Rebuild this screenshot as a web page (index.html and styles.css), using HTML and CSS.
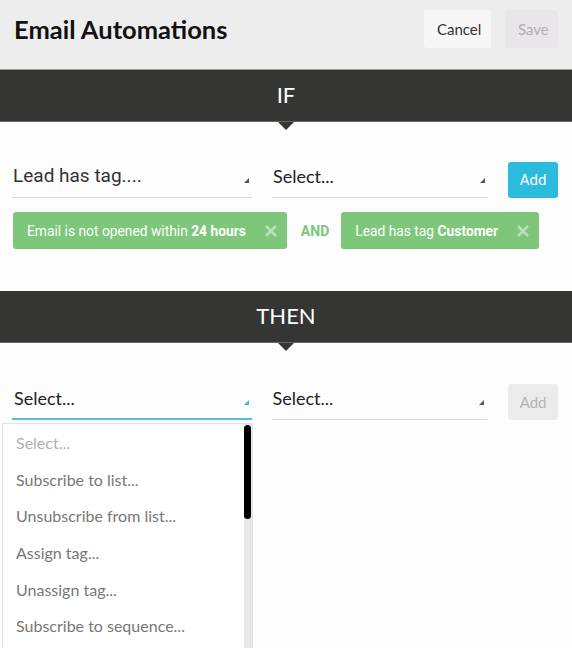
FILE: index.html
```html
<!DOCTYPE html>
<html lang="en">
<head>
  <meta charset="UTF-8">
  <title>Email Automations</title>
  <link rel="stylesheet" href="styles.css">
</head>
<body>
  <header class="topbar">
    <h1 class="title">Email Automations</h1>
    <div class="actions">
      <button class="btn btn-cancel">Cancel</button>
      <button class="btn btn-save">Save</button>
    </div>
  </header>

  <div class="section-bar">IF</div>
  <section class="section if-section">
    <div class="rule-row">
      <div class="select select-roboto">
        <span>Lead has tag....</span>
        <i class="caret"></i>
      </div>
      <div class="select select-second">
        <span>Select...</span>
        <i class="caret"></i>
      </div>
      <button class="add-btn">Add</button>
    </div>
    <div class="chips">
      <div class="chip">
        <span>Email is not opened within <b>24 hours</b></span>
        <svg class="chip-x" viewBox="0 0 12 12"><path d="M1 1L11 11M11 1L1 11"/></svg>
      </div>
      <span class="and">AND</span>
      <div class="chip">
        <span>Lead has tag <b>Customer</b></span>
        <svg class="chip-x" viewBox="0 0 12 12"><path d="M1 1L11 11M11 1L1 11"/></svg>
      </div>
    </div>
  </section>

  <div class="section-bar">THEN</div>
  <section class="section then-section">
    <div class="rule-row">
      <div class="select select-active">
        <span>Select...</span>
        <i class="caret"></i>
        <div class="menu">
          <ul class="menu-list">
            <li class="placeholder">Select...</li>
            <li>Subscribe to list...</li>
            <li>Unsubscribe from list...</li>
            <li>Assign tag...</li>
            <li>Unassign tag...</li>
            <li>Subscribe to sequence...</li>
          </ul>
          <div class="scroll-track"><div class="scroll-thumb"></div></div>
        </div>
      </div>
      <div class="select select-second">
        <span>Select...</span>
        <i class="caret"></i>
      </div>
      <button class="add-btn add-disabled">Add</button>
    </div>
  </section>
</body>
</html>
```

FILE: styles.css
```css
* {
  margin: 0;
  padding: 0;
  box-sizing: border-box;
}

html, body {
  height: 100%;
}

body {
  font-family: Lato, "Liberation Sans", sans-serif;
  background-color: #fcfdfc;
  color: #222;
  overflow: hidden;
}

.topbar {
  height: 70px;
  background-color: #ededed;
  border-bottom: 1px solid #999;
  display: flex;
  align-items: flex-start;
  justify-content: space-between;
  padding: 10px 14px 0 14px;
}

.title {
  font-size: 25.5px;
  font-weight: bold;
  color: #111;
  line-height: 38px;
}

.actions {
  display: flex;
  gap: 14px;
}

.btn {
  height: 38px;
  border: none;
  border-radius: 3px;
  font-family: Lato, sans-serif;
  font-size: 15px;
  padding: 0 13px;
}

.btn-cancel {
  background-color: #f7f7f7;
  color: #333;
  width: 67px;
}

.btn-save {
  background-color: #e8e6e9;
  color: #b0b0b0;
  width: 53px;
}

.section-bar {
  height: 52px;
  background-color: #353634;
  color: #fff;
  font-size: 22px;
  display: flex;
  align-items: center;
  justify-content: center;
  position: relative;
  border-bottom: 1px solid #666;
  padding-bottom: 3px;
}

.section-bar::after {
  content: "";
  position: absolute;
  left: 278px;
  bottom: -9px;
  border-left: 8px solid transparent;
  border-right: 8px solid transparent;
  border-top: 8px solid #353634;
}

.section {
  padding: 0 14px 0 12px;
}

.if-section {
  height: 169px;
  padding-top: 40px;
}

.then-section {
  padding-top: 41px;
}

.rule-row {
  display: flex;
  align-items: flex-start;
  height: 37px;
}

.select {
  position: relative;
  width: 240px;
  height: 36px;
  border-bottom: 1px solid #ddd8df;
  font-size: 18px;
  line-height: 22px;
  padding: 3px 0 0 1px;
  color: #222;
}

.select-roboto {
  font-family: Roboto, sans-serif;
  font-size: 19px;
  color: #333;
}

.select-second {
  width: 216px;
  margin-left: 20px;
}

.select-active {
  border-bottom: 2px solid #52bfe0;
  padding-left: 2px;
}

.caret {
  position: absolute;
  right: 3px;
  top: 16px;
  border-left: 5px solid transparent;
  border-bottom: 5px solid #555;
}

.select-active .caret {
  border-bottom-color: #3bb7de;
}

.add-btn {
  margin-left: 20px;
  width: 50px;
  height: 36px;
  border: none;
  border-radius: 3px;
  background-color: #2bbbdd;
  color: #fff;
  font-family: Roboto, sans-serif;
  font-size: 15px;
}

.add-disabled {
  margin-left: 21px;
  background-color: #ebebeb;
  color: #b3b3b3;
  font-family: Lato, sans-serif;
}

.chips {
  display: flex;
  align-items: center;
  margin-top: 13px;
  padding-left: 1px;
}

.chip {
  height: 37px;
  background-color: #7dc67a;
  color: #fff;
  border-radius: 3px;
  font-family: Roboto, sans-serif;
  font-size: 13.8px;
  display: flex;
  align-items: center;
  gap: 19px;
  padding: 0 10px 0 14px;
}

.chip b {
  font-weight: bold;
}

.chip-x {
  width: 12px;
  height: 12px;
  stroke: #b9e0b7;
  stroke-width: 2.6;
}

.and {
  color: #7dc67a;
  font-family: Roboto, sans-serif;
  font-weight: bold;
  font-size: 14px;
  margin: 0 12px 0 14px;
}

.menu {
  position: absolute;
  top: calc(100% + 5px);
  left: -10px;
  width: 251px;
  height: 240px;
  background-color: #fff;
  border: 1px solid #e2e2e2;
  display: flex;
}

.menu-list {
  list-style: none;
  flex: 1;
  padding-top: 1px;
}

.menu-list li {
  height: 36.6px;
  padding-left: 13px;
  font-size: 16px;
  color: #777;
  display: flex;
  align-items: center;
}

.menu-list .placeholder {
  color: #b0b0b0;
}

.scroll-track {
  width: 8px;
  background-color: #e8e8e8;
}

.scroll-thumb {
  width: 7px;
  height: 94px;
  margin-top: 1px;
  background-color: #000;
  border-radius: 4px;
}
```
